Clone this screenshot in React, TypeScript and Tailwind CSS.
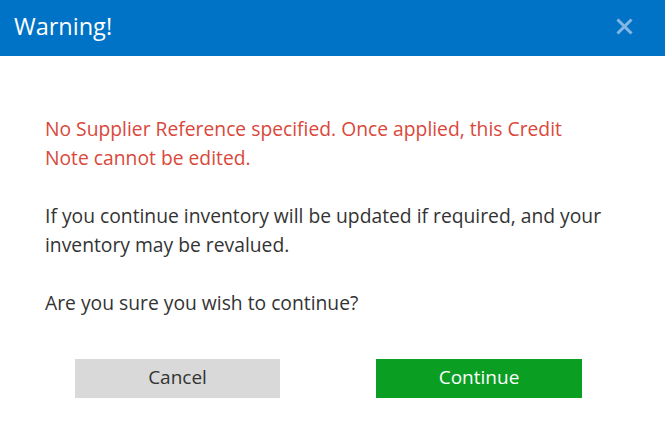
import React from 'react';

const App: React.FC = () => {
  return (
    <div className="w-[665px] h-[430px] bg-white" style={{ fontFamily: '"Open Sans", "Noto Sans", sans-serif' }}>
      {/* Header */}
      <div className="h-[56px] bg-[#0073c6] flex items-center justify-between pl-[14px] pr-[32px] pb-[3px]">
        <h1 className="text-white text-[23.5px] leading-none">Warning!</h1>
        <svg width="17" height="17" viewBox="0 0 17 17" className="text-[#83b6e3]">
          <path d="M2.5 2.5 L14.5 14.5 M14.5 2.5 L2.5 14.5" stroke="currentColor" strokeWidth="3" strokeLinecap="square" />
        </svg>
      </div>
      {/* Body */}
      <div className="pt-[58px] pl-[45px] pr-[58px] text-[19.3px] leading-[29px] text-[#333333]">
        <p className="text-[#d9483b]">
          No Supplier Reference specified. Once applied, this Credit Note cannot be edited.
        </p>
        <p className="mt-[29px]">
          If you continue inventory will be updated if required, and your inventory may be revalued.
        </p>
        <p className="mt-[29px]">Are you sure you wish to continue?</p>
      </div>
      {/* Buttons */}
      <div className="flex justify-between pl-[75px] pr-[83px] mt-[42px]">
        <button className="w-[205px] h-[39px] pb-[2px] bg-[#d9d9d9] text-[#333333] text-[19px]">Cancel</button>
        <button className="w-[206px] h-[39px] pb-[2px] bg-[#0a9e23] text-white text-[19px]">Continue</button>
      </div>
    </div>
  );
};

export default App;
